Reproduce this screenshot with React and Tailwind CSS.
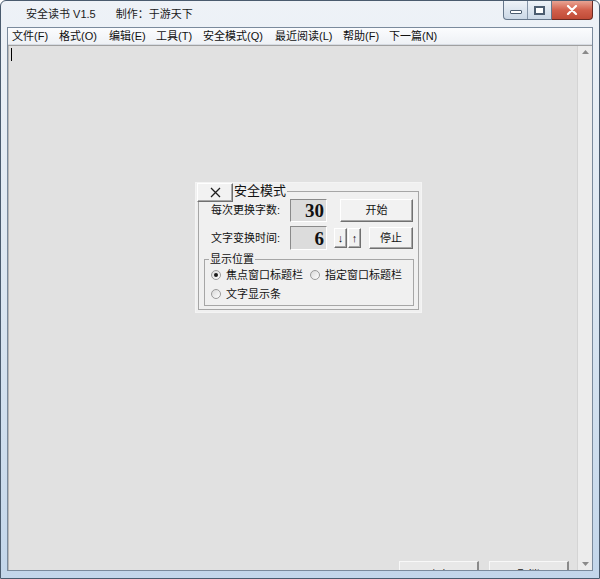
import React from 'react';

// 安全读书 V1.5 主窗口 + 安全模式面板
const font = "font-['Liberation_Sans','Noto_Sans_CJK_SC',sans-serif]";

const menus = [
  ['文件(F)', 'w-[47px]'],
  ['格式(O)', 'w-[50px]'],
  ['编辑(E)', 'w-[47px]'],
  ['工具(T)', 'w-[47px]'],
  ['安全模式(Q)', 'w-[72px]'],
  ['最近阅读(L)', 'w-[68px]'],
  ['帮助(F)', 'w-[46px]'],
  ['下一篇(N)', 'w-[60px]'],
];

const raised =
  'bg-[#f2f2f2] border border-t-white border-l-white border-r-[#707070] border-b-[#707070] shadow-[inset_-1px_-1px_0_#a8a8a8]';
const sunken =
  'bg-[#dcdcdc] border border-t-[#8a8a8a] border-l-[#8a8a8a] border-r-white border-b-white';

function Radio({ checked, label }) {
  return (
    <div className="flex items-center">
      <span className="w-[10px] h-[10px] rounded-full border border-[#9a9a9a] bg-gradient-to-br from-[#d8d8d8] to-white flex items-center justify-center">
        {checked && <span className="w-[4px] h-[4px] rounded-full bg-[#1a1a1a]" />}
      </span>
      <span className="ml-[5px] text-[11px] leading-[18px] text-[#111]">{label}</span>
    </div>
  );
}

function SafeModePanel() {
  return (
    <div className="absolute left-[187px] top-[137px] w-[225px] h-[129px] bg-[#f0f0f0] shadow-[0_0_0_1px_#f4f4f4]">
      {/* 关闭按钮压在分组框左上角 */}
      <div className={`absolute left-[1px] top-0 w-[36px] h-[19px] flex items-center justify-center ${raised}`}>
        <svg width="11" height="11" viewBox="0 0 11 11">
          <path d="M1 1 L10 10 M10 1 L1 10" stroke="#1e1e1e" strokeWidth="1.3" fill="none" />
        </svg>
      </div>

      <fieldset className="mx-[2px] border border-[#a6a6a6] pl-[5px] pr-[4px] pb-[3px]">
        <legend className="ml-[29px] px-[1px] text-[13px] leading-[16px] text-[#111]">安全模式</legend>

        <div className="flex items-center h-[23px] pl-[7px]">
          <span className="w-[79px] text-[11px] text-[#111]">每次更换字数:</span>
          <div className={`w-[37px] h-[23px] flex items-center justify-end pr-[2px] ${sunken}`}>
            <span className="font-['Liberation_Serif',serif] font-bold text-[19px] leading-none text-[#111]">30</span>
          </div>
          <button className={`ml-[13px] w-[73px] h-[23px] text-[11px] text-[#111] ${raised}`}>开始</button>
        </div>

        <div className="flex items-center h-[24px] mt-[4px] pl-[7px]">
          <span className="w-[79px] text-[11px] text-[#111]">文字变换时间:</span>
          <div className={`w-[37px] h-[24px] flex items-center justify-end pr-[2px] ${sunken}`}>
            <span className="font-['Liberation_Serif',serif] font-bold text-[19px] leading-none text-[#111]">6</span>
          </div>
          <button className={`ml-[7px] w-[13px] h-[20px] text-[11px] leading-none text-[#111] ${raised}`}>↓</button>
          <button className={`ml-[1px] w-[13px] h-[20px] text-[11px] leading-none text-[#111] ${raised}`}>↑</button>
          <button className={`ml-[8px] w-[44px] h-[22px] text-[11px] text-[#111] ${raised}`}>停止</button>
        </div>

        <fieldset className="mt-[2px] border border-[#a6a6a6] pl-[6px] pb-[2px]">
          <legend className="ml-[-2px] px-[1px] text-[11px] leading-[14px] text-[#111]">显示位置</legend>
          <div className="flex items-center">
            <div className="w-[99px]">
              <Radio checked label="焦点窗口标题栏" />
            </div>
            <Radio label="指定窗口标题栏" />
          </div>
          <div className="mt-[1px]">
            <Radio label="文字显示条" />
          </div>
        </fieldset>
      </fieldset>
    </div>
  );
}

export default function App() {
  return (
    <div className={`w-[600px] h-[579px] overflow-hidden bg-white ${font}`}>
      <div className="w-[600px] h-[579px] flex flex-col rounded-t-[6px] border border-[#4a5b6e] bg-gradient-to-b from-[#eef2f7] via-[#dbe6f1] to-[#c3d6ea]">
        {/* 标题栏 */}
        <div className="h-[26px] flex items-start">
          <div className="pl-[25px] pt-[6px] text-[11px] leading-[14px] text-[#1a1a1a] whitespace-pre">
            安全读书 V1.5<span className="ml-[20px]">制作：于游天下</span>
          </div>
          <div className="ml-auto mr-[6px] flex h-[19px]">
            <div className="w-[49px] flex rounded-bl-[4px] border border-t-0 border-[#66778b] bg-gradient-to-b from-[#eef3f8] to-[#cbd8e6] overflow-hidden">
              <div className="w-[24px] flex items-center justify-center border-r border-[#8595a8]">
                <span className="w-[12px] h-[4px] mt-[4px] bg-white border border-[#4c5d70] rounded-[1px]" />
              </div>
              <div className="flex-1 flex items-center justify-center">
                <span className="w-[11px] h-[9px] border border-[#4c5d70] bg-white shadow-[inset_0_0_0_1px_#4c5d70,inset_0_0_0_2px_#fff]" />
              </div>
            </div>
            <div className="w-[41px] flex items-center justify-center rounded-br-[4px] border border-t-0 border-l-0 border-[#6b2a22] bg-gradient-to-b from-[#e8a393] via-[#d2604c] to-[#c04a36]">
              <svg width="12" height="10" viewBox="0 0 12 10">
                <path d="M2 1 L10 9 M10 1 L2 9" stroke="#fff" strokeWidth="2.2" strokeLinecap="round" fill="none" />
              </svg>
            </div>
          </div>
        </div>

        {/* 客户区 */}
        <div className="flex-1 mx-[6px] flex flex-col border border-[#7a8a9c] bg-[#f0f0f0]">
          <div className="h-[17px] flex items-center pl-[4px] bg-gradient-to-b from-[#fbfcfe] to-[#eef1f5] border-b border-[#d6dbe2]">
            {menus.map(([label, w]) => (
              <span key={label} className={`${w} text-[11px] leading-[15px] text-[#111]`}>{label}</span>
            ))}
          </div>

          <div className="flex-1 flex border-t border-[#a0a0a0]">
            <div className="flex-1 flex flex-col bg-[#e1e1e1] border-l border-[#b8b8b8]">
              <div className="flex-1 relative">
                <span className="absolute left-[2px] top-[2px] w-[1px] h-[13px] bg-black" />
                <SafeModePanel />
              </div>
              <div className="h-[9px] flex justify-end gap-[10px] pr-[8px] overflow-hidden">
                <div className="w-[80px] h-[24px] flex justify-center pt-[5px] bg-[#e8e8e8] border-l border-t border-[#f8f8f8] border-r-2 border-r-[#8a8a8a] text-[11px] text-[#222]">确定</div>
                <div className="w-[80px] h-[24px] flex justify-center pt-[5px] bg-[#e8e8e8] border-l border-t border-[#f8f8f8] border-r-2 border-r-[#8a8a8a] text-[11px] text-[#222]">取消</div>
              </div>
            </div>
            <div className="w-[15px] flex flex-col justify-between items-center py-[4px] bg-[#ececec] border-l border-[#d4d4d4]">
              <svg width="7" height="4" viewBox="0 0 7 4"><path d="M0 4 L3.5 0 L7 4 Z" fill="#8a8a8a" /></svg>
              <svg width="7" height="4" viewBox="0 0 7 4"><path d="M0 0 L3.5 4 L7 0 Z" fill="#8a8a8a" /></svg>
            </div>
          </div>
        </div>

        <div className="h-[7px]" />
      </div>
    </div>
  );
}
